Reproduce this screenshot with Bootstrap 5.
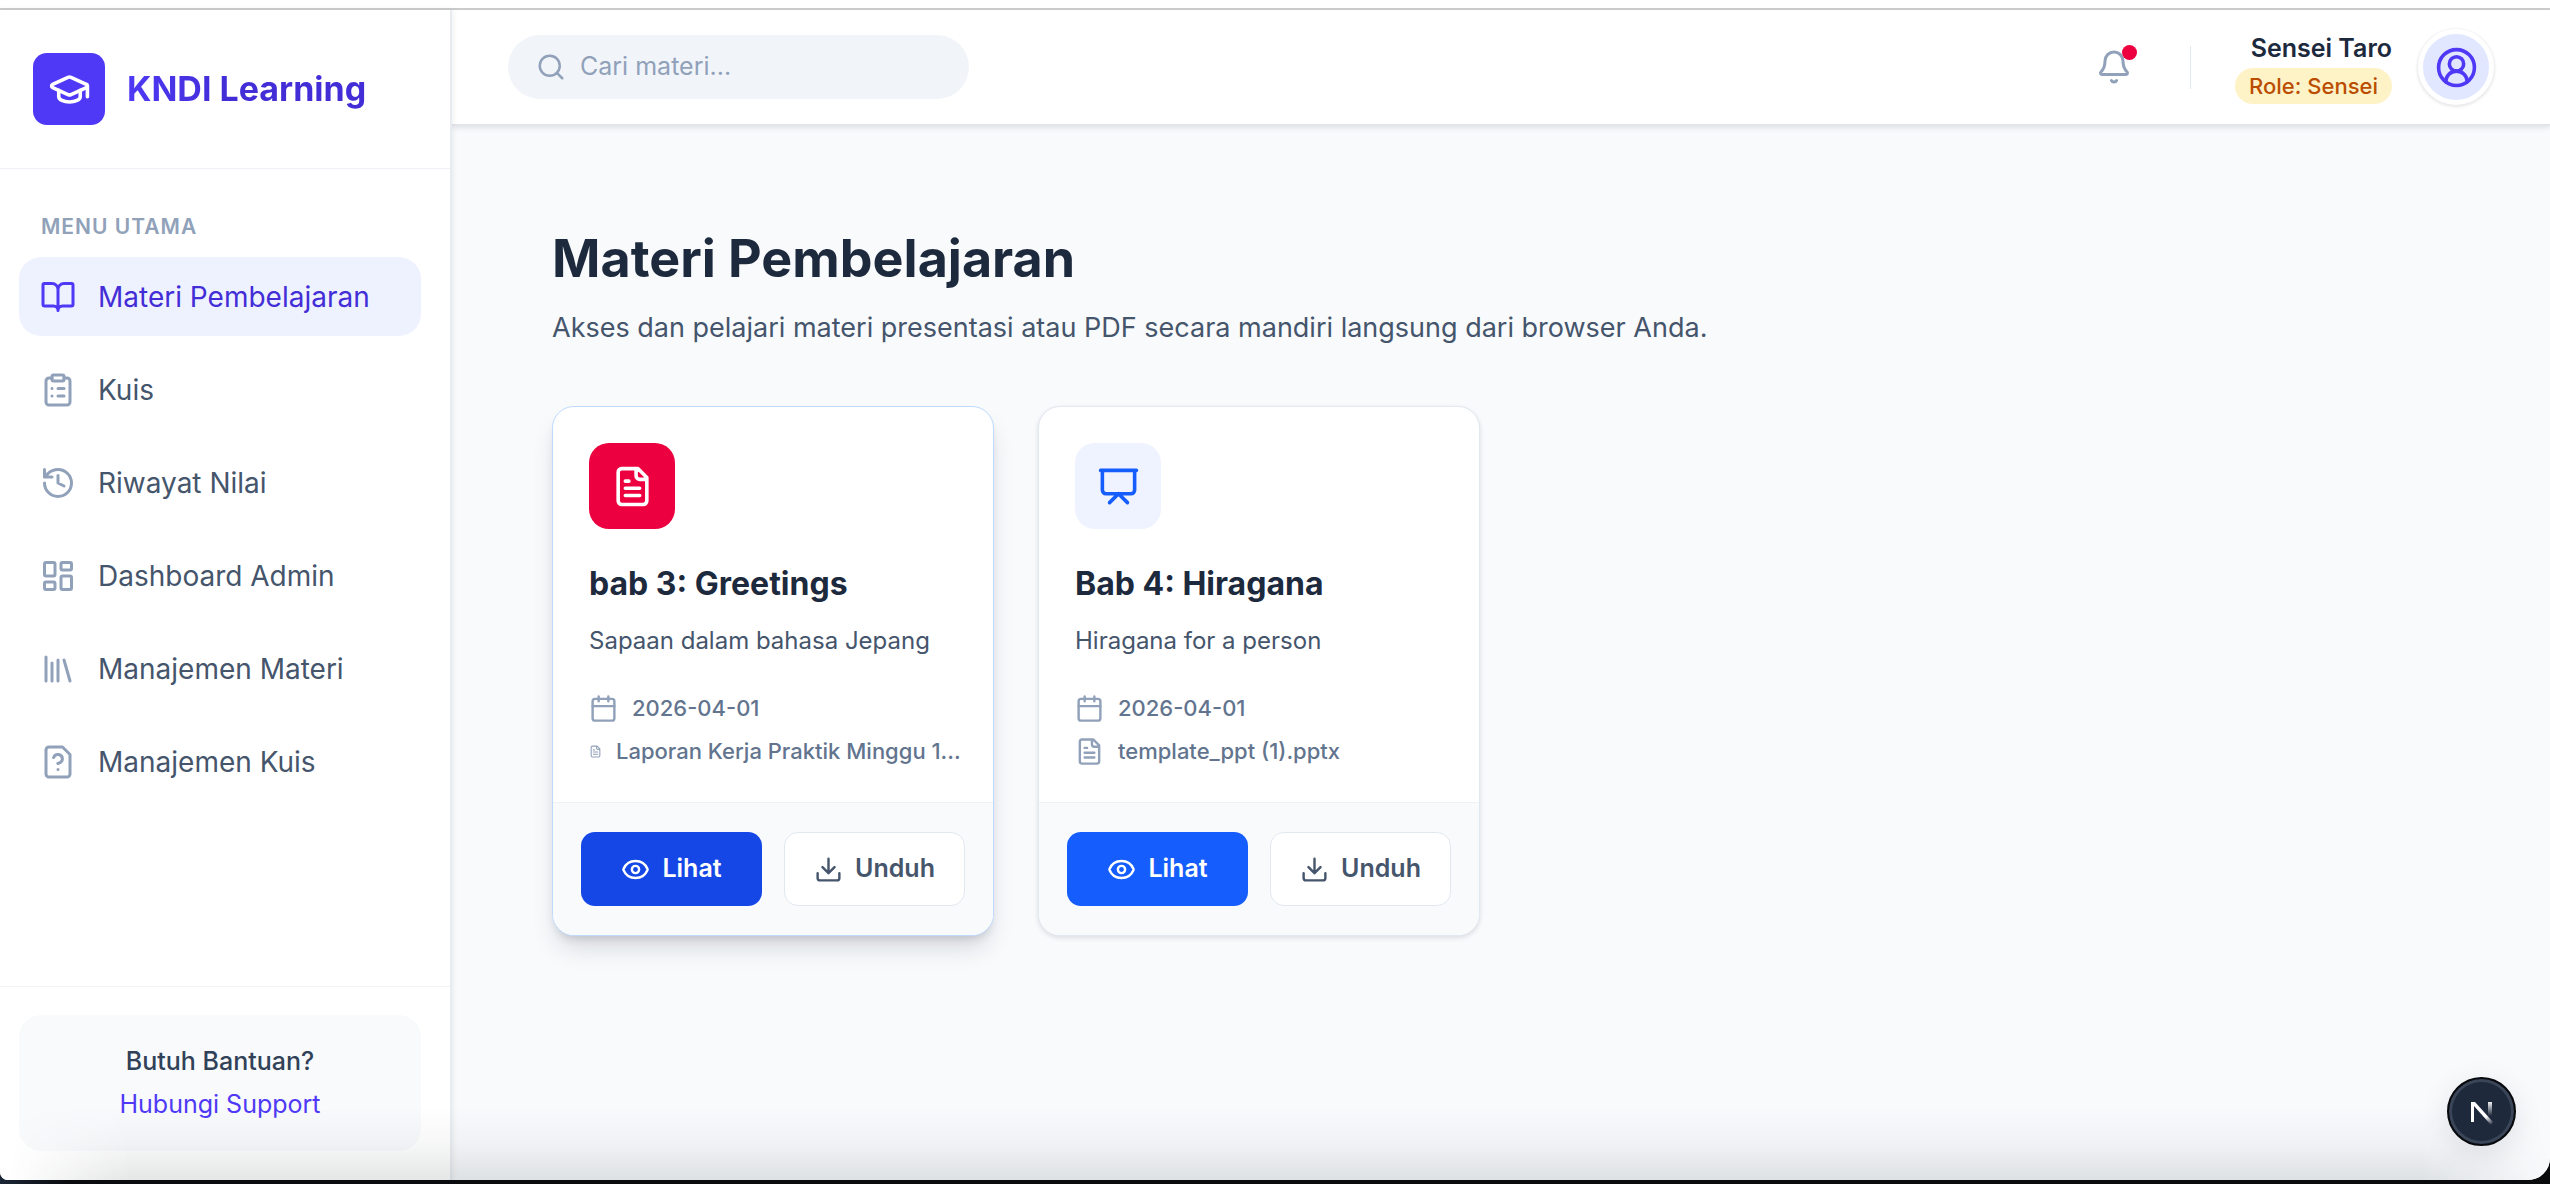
<!DOCTYPE html>
<html lang="id">
<head>
<meta charset="utf-8">
<meta name="viewport" content="width=device-width, initial-scale=1">
<title>KNDI Learning</title>
<link href="https://cdn.jsdelivr.net/npm/bootstrap@5.3.0/dist/css/bootstrap.min.css" rel="stylesheet">
<style>
  body { font-family: Inter, "Noto Sans", sans-serif; color: #1d293d; background: linear-gradient(to right, #1b2636, #0a0b0d 70px); }
  svg { fill: none; stroke: currentColor; stroke-width: 2; stroke-linecap: round; stroke-linejoin: round; flex: none; }
  .window { height: calc(100vh - 4px); background: #fff; border-radius: 0 0 22px 8px; overflow: hidden; position: relative; padding-top: 8px; }
  .shell { border-top: 2px solid #cdcdcd; }
  .window-shade { position: absolute; inset: auto 0 0 0; height: 72px; z-index: 3; pointer-events: none; background: linear-gradient(to bottom, transparent, rgba(40,50,50,.04) 50%, rgba(40,50,50,.12)); -webkit-mask-image: linear-gradient(to right, transparent 10px, #000 130px, #000 calc(100% - 130px), transparent); mask-image: linear-gradient(to right, transparent 10px, #000 130px, #000 calc(100% - 130px), transparent); }

  .side { width: 452px; border-right: 2px solid #e8ecf1; box-shadow: 1px 0 6px rgba(15,23,43,.07); z-index: 2; }
  .brand { padding: 43px 33px; border-bottom: 1px solid #eef1f6; gap: 22px; }
  .brand-tile { width: 72px; height: 72px; border-radius: 14px; background: #4f39f6; }
  .brand-name { font-size: 34px; line-height: 44px; font-weight: 700; background: linear-gradient(to right, #4f39f6, #432dd7 40%); -webkit-background-clip: text; background-clip: text; color: transparent; }
  .menu { padding: 41px 29px 0 19px; }
  .menu-title { font-size: 21px; line-height: 34px; font-weight: 600; color: #90a1b9; letter-spacing: 1px; padding: 0 22px; margin-bottom: 13px; }
  .side .nav-link { height: 79px; border-radius: 22px; padding: 0 21px; gap: 22px; font-size: 28px; color: #45556c; }
  .side .nav-link svg { color: #90a1b9; }
  .side .nav-link.active { background: #eef2ff; color: #432dd7; }
  .side .nav-link.active svg { color: #4f39f6; }
  .menu .nav { gap: 14px; }
  .help-wrap { border-top: 1px solid #f1f3f6; padding: 28px 29px 29px 19px; }
  .help-box { background: #f8fafc; border-radius: 22px; padding: 25px 16px; line-height: 43px; font-size: 25px; }
  .help-box p { color: #314158; font-weight: 500; }
  .help-box a { color: #4f39f6; }

  .top { height: 116px; background: #fff; border-bottom: 2px solid #e2e5e9; box-shadow: 0 2px 5px rgba(15,23,43,.1); padding: 0 56px; z-index: 1; }
  .finder { width: 461px; height: 64px; border-radius: 32px; background: #f1f5f9; padding: 0 28px; gap: 14px; color: #90a1b9; }
  .finder input { font-size: 25px; color: #45556c; min-width: 0; }
  .finder input::placeholder { color: #90a1b9; opacity: 1; }
  .bell { color: #90a1b9; margin-right: 58px; }
  .bell-dot { position: absolute; top: -4px; right: -5px; width: 15px; height: 15px; border-radius: 50%; background: #ec003f; }
  .sep { width: 1px; height: 43px; background: #e2e8f0; margin-right: 44px; }
  .who-box { gap: 2px; }
  .who { font-size: 25px; line-height: 36px; font-weight: 600; }
  .role { font-size: 22px; line-height: 36px; height: 36px; border-radius: 18px; padding: 0 14px; background: #fef3c6; color: #bb4d00; font-weight: 500; }
  .avatar { width: 76px; height: 76px; border-radius: 50%; background: #e0e7ff; border: 5px solid #fff; box-shadow: 0 1px 3px 1px rgba(15,23,43,.1); color: #4f39f6; margin-left: 26px; }

  .page { background: #f8fafc; padding: 100px; }
  .page h1 { font-size: 52px; line-height: 66px; font-weight: 700; margin: 0 0 16px; }
  .page-lead { font-size: 27px; line-height: 40px; color: #45556c; margin-bottom: 58px; }
  .deck { gap: 44px; }
  .lesson { width: 442px; border: 1px solid #e2e8f0; border-radius: 22px; background: #fff; overflow: hidden; box-shadow: 0 2px 5px rgba(15,23,43,.12); }
  .lesson.lifted { border-color: #bedbff; box-shadow: 0 16px 26px -5px rgba(15,23,43,.14), 0 6px 10px -4px rgba(15,23,43,.16); }
  .lesson-main { padding: 36px 28px 33px 36px; }
  .lesson-tile { width: 86px; height: 86px; border-radius: 20px; background: #eff3ff; color: #155dfc; margin-bottom: 34px; }
  .lifted .lesson-tile { background: #ec003f; color: #fff; }
  .lesson h2 { font-size: 32px; line-height: 42px; font-weight: 700; margin: 0 0 18px; }
  .lesson-text { font-size: 24px; line-height: 36px; color: #45556c; margin-bottom: 32px; }
  .facts { font-size: 22px; line-height: 35px; gap: 8px; font-weight: 500; color: #62748e; }
  .facts svg { color: #90a1b9; }
  .facts li { gap: 14px; }
  .lesson-foot { background: #f8fafc; border-top: 1px solid #eef1f5; padding: 29px 28px; gap: 22px; }
  .lesson-foot .btn { height: 74px; border-radius: 14px; font-size: 25px; font-weight: 600; gap: 12px; flex: 1 1 0; padding: 0; }
  .btn-see { background: #155dfc; color: #fff; }
  .lifted .btn-see { background: #1447e6; }
  .btn-get { background: #fff; border: 1px solid #e2e8f0; color: #45556c; }
  .dev-badge { position: absolute; right: 34px; bottom: 34px; width: 69px; height: 69px; border-radius: 50%; background: #1f293c; border: 2px solid #07090d; box-shadow: inset 0 0 0 3px #3a4557, 0 8px 30px rgba(15,23,43,.1); padding: 0; z-index: 4; }
</style>
</head>
<body>
<div class="window d-flex flex-column">
  <div class="shell d-flex flex-grow-1">
    <aside class="side bg-white d-flex flex-column flex-shrink-0">
      <div class="brand d-flex align-items-center">
        <div class="brand-tile d-flex align-items-center justify-content-center text-white">
          <svg width="43" height="43" viewBox="0 0 24 24"><path d="M21.42 10.922a1 1 0 0 0-.019-1.838L12.83 5.18a2 2 0 0 0-1.66 0L2.6 9.08a1 1 0 0 0 0 1.832l8.57 3.908a2 2 0 0 0 1.66 0z"/><path d="M22 10v6M6 12.500V16a6 3 0 0 0 12 0v-3.500"/></svg>
        </div>
        <span class="brand-name">KNDI Learning</span>
      </div>
      <div class="menu flex-grow-1">
        <div class="menu-title">MENU UTAMA</div>
        <nav class="nav flex-column">
          <a class="nav-link active d-flex align-items-center" href="#" aria-current="page"><svg width="36" height="36" viewBox="0 0 24 24"><path d="M12 7v14M3 18a1 1 0 0 1-1-1V4a1 1 0 0 1 1-1h5a4 4 0 0 1 4 4 4 4 0 0 1 4-4h5a1 1 0 0 1 1 1v13a1 1 0 0 1-1 1h-6a3 3 0 0 0-3 3 3 3 0 0 0-3-3z"/></svg>Materi Pembelajaran</a>
          <a class="nav-link d-flex align-items-center" href="#"><svg width="36" height="36" viewBox="0 0 24 24"><rect x="8" y="2" width="8" height="4" rx="1"/><path d="M16 4h2a2 2 0 0 1 2 2v14a2 2 0 0 1-2 2H6a2 2 0 0 1-2-2V6a2 2 0 0 1 2-2h2M12 11h4M12 16h4M8 11h.01M8 16h.01"/></svg>Kuis</a>
          <a class="nav-link d-flex align-items-center" href="#"><svg width="36" height="36" viewBox="0 0 24 24"><path d="M3 12a9 9 0 1 0 9-9 9.750 9.750 0 0 0-6.740 2.740L3 8M3 3v5h5M12 7v5l4 2"/></svg>Riwayat Nilai</a>
          <a class="nav-link d-flex align-items-center" href="#"><svg width="36" height="36" viewBox="0 0 24 24"><rect x="3" y="3" width="7" height="9" rx="1"/><rect x="14" y="3" width="7" height="5" rx="1"/><rect x="14" y="12" width="7" height="9" rx="1"/><rect x="3" y="16" width="7" height="5" rx="1"/></svg>Dashboard Admin</a>
          <a class="nav-link d-flex align-items-center" href="#"><svg width="36" height="36" viewBox="0 0 24 24"><path d="m16 6 4 14M12 6v14M8 8v12M4 4v16"/></svg>Manajemen Materi</a>
          <a class="nav-link d-flex align-items-center" href="#"><svg width="36" height="36" viewBox="0 0 24 24"><path d="M15 2H6a2 2 0 0 0-2 2v16a2 2 0 0 0 2 2h12a2 2 0 0 0 2-2V7zM12 17h.01M9.100 9a3 3 0 0 1 5.820 1c0 2-3 3-3 3"/></svg>Manajemen Kuis</a>
        </nav>
      </div>
      <div class="help-wrap">
        <div class="help-box text-center">
          <p class="mb-0">Butuh Bantuan?</p>
          <a class="text-decoration-none" href="#">Hubungi Support</a>
        </div>
      </div>
    </aside>

    <div class="d-flex flex-column flex-grow-1">
      <header class="top d-flex align-items-center position-relative">
        <label class="finder d-flex align-items-center">
          <svg width="30" height="30" viewBox="0 0 24 24"><circle cx="11" cy="11" r="8"/><path d="m21 21-4.300-4.300"/></svg>
          <input class="border-0 bg-transparent p-0 flex-grow-1" type="search" placeholder="Cari materi..." aria-label="Cari materi">
        </label>
        <button class="bell btn border-0 p-0 d-flex position-relative ms-auto" type="button" aria-label="Notifikasi">
          <svg width="36" height="36" viewBox="0 0 24 24"><path d="M10.268 21a2 2 0 0 0 3.464 0M3.262 15.326A1 1 0 0 0 4 17h16a1 1 0 0 0 .740-1.673C19.410 13.956 18 12.499 18 8A6 6 0 0 0 6 8c0 4.499-1.411 5.956-2.738 7.326"/></svg>
          <span class="bell-dot"></span>
        </button>
        <div class="sep"></div>
        <div class="who-box d-flex flex-column align-items-end">
          <span class="who">Sensei Taro</span>
          <span class="role">Role: Sensei</span>
        </div>
        <div class="avatar d-flex align-items-center justify-content-center">
          <svg width="43" height="43" viewBox="0 0 24 24"><path d="M18 20a6 6 0 0 0-12 0"/><circle cx="12" cy="10" r="4"/><circle cx="12" cy="12" r="10"/></svg>
        </div>
      </header>

      <main class="page flex-grow-1">
        <h1>Materi Pembelajaran</h1>
        <p class="page-lead">Akses dan pelajari materi presentasi atau PDF secara mandiri langsung dari browser Anda.</p>
        <div class="deck d-flex flex-wrap">
          <article class="lesson lifted">
            <div class="lesson-main">
              <div class="lesson-tile d-flex align-items-center justify-content-center">
                <svg width="43" height="43" viewBox="0 0 24 24"><path d="M15 2H6a2 2 0 0 0-2 2v16a2 2 0 0 0 2 2h12a2 2 0 0 0 2-2V7ZM14 2v4a2 2 0 0 0 2 2h4M10 9H8M16 13H8M16 17H8"/></svg>
              </div>
              <h2>bab 3: Greetings</h2>
              <p class="lesson-text">Sapaan dalam bahasa Jepang</p>
              <ul class="facts list-unstyled d-flex flex-column mb-0">
                <li class="d-flex align-items-center"><svg width="29" height="29" viewBox="0 0 24 24"><path d="M8 2v4M16 2v4M3 10h18"/><rect x="3" y="4" width="18" height="18" rx="2"/></svg>2026-04-01</li>
                <li class="d-flex align-items-center"><svg width="13" height="13" viewBox="0 0 24 24"><path d="M15 2H6a2 2 0 0 0-2 2v16a2 2 0 0 0 2 2h12a2 2 0 0 0 2-2V7ZM14 2v4a2 2 0 0 0 2 2h4M10 9H8M16 13H8M16 17H8"/></svg><span class="text-truncate">Laporan Kerja Praktik Minggu 1...</span></li>
              </ul>
            </div>
            <div class="lesson-foot d-flex">
              <button class="btn btn-see d-flex align-items-center justify-content-center" type="button"><svg width="29" height="29" viewBox="0 0 24 24"><path d="M2.062 12.348a1 1 0 0 1 0-.696 10.750 10.750 0 0 1 19.876 0 1 1 0 0 1 0 .696 10.750 10.750 0 0 1-19.876 0"/><circle cx="12" cy="12" r="3"/></svg>Lihat</button>
              <button class="btn btn-get d-flex align-items-center justify-content-center" type="button"><svg width="29" height="29" viewBox="0 0 24 24"><path d="M12 15V3M21 15v4a2 2 0 0 1-2 2H5a2 2 0 0 1-2-2v-4M7 10l5 5 5-5"/></svg>Unduh</button>
            </div>
          </article>
          <article class="lesson">
            <div class="lesson-main">
              <div class="lesson-tile d-flex align-items-center justify-content-center">
                <svg width="43" height="43" viewBox="0 0 24 24"><path d="M2 3h20M21 3v11a2 2 0 0 1-2 2H5a2 2 0 0 1-2-2V3M7 21l5-5 5 5"/></svg>
              </div>
              <h2>Bab 4: Hiragana</h2>
              <p class="lesson-text">Hiragana for a person</p>
              <ul class="facts list-unstyled d-flex flex-column mb-0">
                <li class="d-flex align-items-center"><svg width="29" height="29" viewBox="0 0 24 24"><path d="M8 2v4M16 2v4M3 10h18"/><rect x="3" y="4" width="18" height="18" rx="2"/></svg>2026-04-01</li>
                <li class="d-flex align-items-center"><svg width="29" height="29" viewBox="0 0 24 24"><path d="M15 2H6a2 2 0 0 0-2 2v16a2 2 0 0 0 2 2h12a2 2 0 0 0 2-2V7ZM14 2v4a2 2 0 0 0 2 2h4M10 9H8M16 13H8M16 17H8"/></svg><span class="text-truncate">template_ppt (1).pptx</span></li>
              </ul>
            </div>
            <div class="lesson-foot d-flex">
              <button class="btn btn-see d-flex align-items-center justify-content-center" type="button"><svg width="29" height="29" viewBox="0 0 24 24"><path d="M2.062 12.348a1 1 0 0 1 0-.696 10.750 10.750 0 0 1 19.876 0 1 1 0 0 1 0 .696 10.750 10.750 0 0 1-19.876 0"/><circle cx="12" cy="12" r="3"/></svg>Lihat</button>
              <button class="btn btn-get d-flex align-items-center justify-content-center" type="button"><svg width="29" height="29" viewBox="0 0 24 24"><path d="M12 15V3M21 15v4a2 2 0 0 1-2 2H5a2 2 0 0 1-2-2v-4M7 10l5 5 5-5"/></svg>Unduh</button>
            </div>
          </article>
        </div>
      </main>
    </div>
  </div>
  <div class="window-shade"></div>
  <button class="dev-badge d-flex align-items-center justify-content-center" type="button" aria-label="Next.js">
    <svg width="24" height="26" viewBox="0 0 24 26">
      <defs><linearGradient id="fadeA" gradientUnits="userSpaceOnUse" x1="12" y1="12" x2="22" y2="26"><stop stop-color="#fff"/><stop offset=".4" stop-color="#fff"/><stop offset="1" stop-color="#fff" stop-opacity="0"/></linearGradient><linearGradient id="fadeB" gradientUnits="userSpaceOnUse" x1="0" y1="2" x2="0" y2="17"><stop stop-color="#fff"/><stop offset="1" stop-color="#fff" stop-opacity="0"/></linearGradient></defs>
      <path stroke="none" fill="url(#fadeA)" d="M1 3h4l18 20-2 3L4 7v16H1z"/><path stroke="none" fill="url(#fadeB)" d="M18 3h4v14h-4z"/>
    </svg>
  </button>
</div>
<script src="https://cdn.jsdelivr.net/npm/bootstrap@5.3.0/dist/js/bootstrap.bundle.min.js"></script>
</body>
</html>
